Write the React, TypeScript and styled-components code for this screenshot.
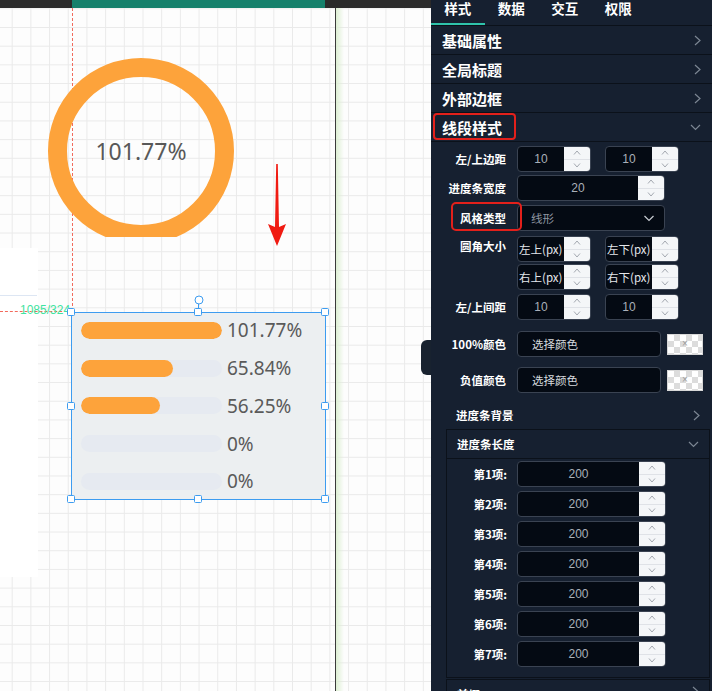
import React from 'react';
import styled, { createGlobalStyle } from 'styled-components';

const ORANGE = '#fda33b';
const BLUE = '#3d9cf0';
const GRID = '#eaeaea';
const PANEL_BG = '#162030';
const LINE = '#0b111a';

const GlobalStyle = createGlobalStyle`
  html, body {
    margin: 0;
    padding: 0;
    background: #fff;
  }
  body {
    width: 712px;
    height: 691px;
    overflow: hidden;
    font-family: "Noto Sans", "Noto Sans CJK SC", sans-serif;
  }
`;

const Root = styled.div`
  display: flex;
  width: 712px;
  height: 691px;
  overflow: hidden;
`;

/* ---------- canvas ---------- */

const Canvas = styled.div`
  width: 431px;
  display: flex;
  flex-direction: column;
`;

const ScrollTrack = styled.div`
  height: 8px;
  background: #2a2a2a;
  display: flex;
`;

const ScrollThumb = styled.div`
  margin-left: 72px;
  width: 253px;
  background: #15806b;
`;

const Stage = styled.div`
  position: relative;
  flex: 1;
  overflow: hidden;
  background-color: #fdfdfd;
  background-image: linear-gradient(to right, ${GRID} 1px, transparent 1px),
    linear-gradient(to bottom, ${GRID} 1px, transparent 1px);
  background-size: 18.7px 18.7px;
  background-position: 11.7px 0.3px;
`;

const SideSheet = styled.div`
  position: absolute;
  left: 0;
  top: 240px;
  width: 38px;
  height: 329px;
  background: #fff;
`;

const SheetRule = styled.div`
  margin-top: 47px;
  width: 37px;
  height: 1px;
  background: #dde6f3;
`;

const GuideV = styled.div`
  position: absolute;
  left: 72px;
  top: 0;
  height: 303px;
  border-left: 1px dashed #f26a5c;
`;

const GuideH = styled.div`
  position: absolute;
  left: 0;
  top: 303px;
  width: 72px;
  border-top: 1px dashed #f26a5c;
`;

const Coord = styled.span`
  position: absolute;
  left: 20px;
  top: 295px;
  font-family: "Liberation Sans", sans-serif;
  font-size: 12px;
  color: #3fe3a0;
`;

const RingWidget = styled.div`
  position: absolute;
  left: 39px;
  top: 41px;
  width: 204px;
  height: 188px;
  overflow: hidden;
`;

const RingFace = styled.div`
  position: relative;
  width: 204px;
  height: 204px;
  display: flex;
  align-items: center;
  justify-content: center;

  svg {
    position: absolute;
    inset: 0;
  }
`;

const RingValue = styled.span`
  position: relative;
  font-size: 23px;
  color: #585858;
  font-family: "Noto Sans", sans-serif;
`;

const ArrowMark = styled.svg`
  position: absolute;
  left: 266px;
  top: 155px;
`;

const ScreenEdge = styled.div`
  position: absolute;
  left: 335px;
  top: 0;
  bottom: 0;
  width: 8px;
  border-left: 1px solid #3a3a3a;
  background: linear-gradient(to right, #ddefd3, rgba(221, 239, 211, 0));
`;

const ProgressFrame = styled.div`
  position: absolute;
  left: 71px;
  top: 304px;
  width: 255px;
  height: 188px;
  box-sizing: border-box;
  background: #eceff1;
  border: 1px solid ${BLUE};
`;

const ProgressList = styled.div`
  display: grid;
  grid-auto-rows: 37.75px;
  margin-top: -1.5px;
  padding-left: 9px;
`;

const ProgressRow = styled.div`
  display: flex;
  align-items: center;
`;

const Track = styled.div`
  width: 141px;
  height: 17px;
  border-radius: 9px;
  background: #e6eaf1;
  overflow: hidden;
`;

const Fill = styled.div`
  height: 100%;
  border-radius: 9px;
  background: ${ORANGE};
`;

const ProgressValue = styled.span`
  margin-left: 5px;
  font-size: 19px;
  color: #5a5a5a;
  font-family: "Noto Sans", sans-serif;
`;

const Handle = styled.span<{ $x: number; $y: number }>`
  position: absolute;
  left: ${p => p.$x}px;
  top: ${p => p.$y}px;
  width: 8px;
  height: 8px;
  box-sizing: border-box;
  transform: translate(-50%, -50%);
  background: #fff;
  border: 1.5px solid ${BLUE};
  border-radius: 1.5px;
`;

const RotateStem = styled.span`
  position: absolute;
  left: 126px;
  top: -10px;
  width: 1px;
  height: 6px;
  background: ${BLUE};
`;

const RotateKnob = styled.span`
  position: absolute;
  left: 127px;
  top: -13px;
  width: 9px;
  height: 9px;
  box-sizing: border-box;
  transform: translate(-50%, -50%);
  border: 1.5px solid ${BLUE};
  border-radius: 50%;
  background: #fff;
`;

/* ---------- panel ---------- */

const Panel = styled.aside`
  position: relative;
  width: 281px;
  height: 691px;
  background: ${PANEL_BG};
  color: #fff;
  font-family: "Noto Sans CJK SC", "Noto Sans", sans-serif;
  display: flex;
  flex-direction: column;
  flex-shrink: 0;
`;

const SideTab = styled.div`
  position: absolute;
  left: -10px;
  top: 340px;
  width: 10px;
  height: 35px;
  border-radius: 6px 0 0 6px;
  background: #18222f;
`;

const Tabs = styled.div`
  display: flex;
  height: 25px;
  border-bottom: 1px solid ${LINE};
  flex-shrink: 0;
`;

const Tab = styled.div<{ $active?: boolean }>`
  width: 53.5px;
  height: 25px;
  box-sizing: border-box;
  padding-top: 1px;
  text-align: center;
  font-size: 13.5px;
  font-weight: 700;
  line-height: 14px;
  border-bottom: 2px solid ${p => (p.$active ? '#2fc3ab' : 'transparent')};
`;

const SectionHeader = styled.div`
  position: relative;
  height: 28px;
  flex-shrink: 0;
  display: flex;
  align-items: center;
  justify-content: space-between;
  padding: 0 11px 0 11px;
  border-bottom: 1px solid ${LINE};
  font-size: 15px;
  font-weight: 700;
`;

const Callout = styled.span`
  position: absolute;
  left: 2px;
  top: 0;
  width: 83px;
  height: 27px;
  box-sizing: border-box;
  border: 2px solid #e3201b;
  border-radius: 4px;
`;

const Form = styled.div`
  display: flex;
  flex-direction: column;
`;

const FieldRow = styled.div<{ $mt: number; $top?: boolean }>`
  display: flex;
  align-items: ${p => (p.$top ? 'flex-start' : 'center')};
  margin-top: ${p => p.$mt}px;
`;

const FieldLabel = styled.div<{ $w?: number; $pad?: number }>`
  position: relative;
  width: ${p => p.$w ?? 86}px;
  padding-right: ${p => p.$pad ?? 11}px;
  box-sizing: border-box;
  flex-shrink: 0;
  text-align: right;
  font-size: 11.5px;
  font-weight: 700;
  line-height: 20px;
  white-space: nowrap;
`;

const LabelCallout = styled.span`
  position: absolute;
  left: 20px;
  top: -6px;
  width: 71px;
  height: 29px;
  box-sizing: border-box;
  border: 2px solid #e3201b;
  border-radius: 5px;
`;

const Pair = styled.div`
  display: flex;
  gap: 14px;
`;

const Stack = styled.div`
  display: flex;
  flex-direction: column;
  gap: 2px;
`;

const Field = styled.div<{ $w: number }>`
  display: flex;
  width: ${p => p.$w}px;
  height: 26px;
  box-sizing: border-box;
  border: 1px solid #3a4352;
  border-radius: 4px;
  background: #040a13;
  overflow: hidden;
`;

const FieldValue = styled.div<{ $placeholder?: boolean }>`
  flex: 1;
  display: flex;
  align-items: center;
  justify-content: ${p => (p.$placeholder ? 'flex-start' : 'center')};
  padding-left: ${p => (p.$placeholder ? '1px' : '0')};
  font-family: ${p => (p.$placeholder ? '"Noto Sans CJK SC", sans-serif' : '"Liberation Sans", sans-serif')};
  font-size: ${p => (p.$placeholder ? '11.5px' : '12px')};
  color: ${p => (p.$placeholder ? '#e4e7eb' : '#a9b0b9')};
  white-space: nowrap;
`;

const Stepper = styled.div`
  width: 26px;
  flex-shrink: 0;
  display: flex;
  flex-direction: column;
  background: #f4f6f8;
`;

const StepHalf = styled.div<{ $first?: boolean }>`
  flex: 1;
  display: flex;
  align-items: center;
  justify-content: center;
  border-bottom: ${p => (p.$first ? '1px solid #dfe2e7' : 'none')};
`;

const SelectBox = styled.div`
  display: flex;
  align-items: center;
  justify-content: space-between;
  width: 148px;
  height: 26px;
  box-sizing: border-box;
  padding: 0 9px 0 13px;
  border: 1px solid #3a4352;
  border-radius: 4px;
  background: #040a13;
  font-size: 11.5px;
  color: #8e96a1;
`;

const ColorInput = styled.div`
  display: flex;
  align-items: center;
  width: 144px;
  height: 26px;
  box-sizing: border-box;
  padding-left: 14px;
  border: 1px solid #3a4352;
  border-radius: 4px;
  background: #040a13;
  font-size: 11.5px;
  color: #d6dadf;
`;

const Swatch = styled.div`
  position: relative;
  margin-left: 6px;
  width: 36px;
  height: 21px;
  box-sizing: border-box;
  border: 1px solid #d8d8d8;
  background-color: #fff;
  background-image: linear-gradient(45deg, #dcdcdc 25%, transparent 25%),
    linear-gradient(-45deg, #dcdcdc 25%, transparent 25%),
    linear-gradient(45deg, transparent 75%, #dcdcdc 75%),
    linear-gradient(-45deg, transparent 75%, #dcdcdc 75%);
  background-size: 12px 12px;
  background-position: 0 0, 0 6px, 6px -6px, -6px 0;
  display: flex;
  align-items: center;
  justify-content: center;
  font-family: "Liberation Sans", sans-serif;
  font-size: 10px;
  line-height: 10px;
  color: #9a9a9a;
`;

const SubHeader = styled.div`
  height: 28px;
  flex-shrink: 0;
  display: flex;
  align-items: center;
  justify-content: space-between;
  padding: 0 12px 0 25px;
  margin-top: 8px;
  font-size: 11.5px;
  font-weight: 700;
`;

const SubPanel = styled.div`
  margin: 0 2px 0 15px;
  border: 1px solid ${LINE};
  flex-shrink: 0;
`;

const SubPanelHeader = styled.div`
  height: 28px;
  display: flex;
  align-items: center;
  justify-content: space-between;
  padding: 0 10px 0 10px;
  border-bottom: 1px solid ${LINE};
  font-size: 11.5px;
  font-weight: 700;
`;

const SubPanelBody = styled.div`
  display: flex;
  flex-direction: column;
  gap: 4px;
  padding: 2px 0 10px;
`;

const NextPanel = styled.div`
  margin: 1px 2px 0 15px;
  border: 1px solid ${LINE};
  height: 40px;
  padding: 6px 10px 0;
  box-sizing: border-box;
  font-size: 11.5px;
  font-weight: 700;
  display: flex;
  justify-content: space-between;
  align-items: flex-start;
`;

/* ---------- icons ---------- */

const ChevronRight = () => (
  <svg width="7" height="11" viewBox="0 0 7 11">
    <polyline points="1,1 6,5.5 1,10" fill="none" stroke="#7c8693" strokeWidth="1.2" />
  </svg>
);

const ChevronDown = ({ color = '#7c8693', w = 11 }: { color?: string; w?: number }) => (
  <svg width={w} height={Math.round(w * 0.6)} viewBox="0 0 11 7">
    <polyline points="1,1 5.5,5.5 10,1" fill="none" stroke={color} strokeWidth="1.2" />
  </svg>
);

const StepArrow = ({ up }: { up?: boolean }) => (
  <svg width="8" height="5" viewBox="0 0 8 5">
    <polyline
      points={up ? '1,4.5 4,1 7,4.5' : '1,0.5 4,4 7,0.5'}
      fill="none"
      stroke="#a3a8b0"
      strokeWidth="1"
    />
  </svg>
);

/* ---------- pieces ---------- */

const NumberField: React.FC<{ width: number; value?: string; placeholder?: string }> = ({
  width,
  value,
  placeholder,
}) => (
  <Field $w={width}>
    <FieldValue $placeholder={!!placeholder}>{placeholder ?? value}</FieldValue>
    <Stepper>
      <StepHalf $first>
        <StepArrow up />
      </StepHalf>
      <StepHalf>
        <StepArrow />
      </StepHalf>
    </Stepper>
  </Field>
);

const progress = [
  { label: '101.77%', width: 141 },
  { label: '65.84%', width: 92 },
  { label: '56.25%', width: 79 },
  { label: '0%', width: 0 },
  { label: '0%', width: 0 },
];

const handles = [
  [0, 0], [127, 0], [254, 0],
  [0, 94], [254, 94],
  [0, 187], [127, 187], [254, 187],
];

const tabs = ['样式', '数据', '交互', '权限'];
const collapsed = ['基础属性', '全局标题', '外部边框'];
const items = [1, 2, 3, 4, 5, 6, 7];

export default function App() {
  return (
    <>
      <GlobalStyle />
      <Root>
        <Canvas>
          <ScrollTrack>
            <ScrollThumb />
          </ScrollTrack>
          <Stage>
            <SideSheet>
              <SheetRule />
            </SideSheet>
            <GuideV />
            <GuideH />
            <Coord>1085/324</Coord>

            <RingWidget>
              <RingFace>
                <svg width="204" height="204" viewBox="0 0 204 204">
                  <circle cx="102" cy="102" r="83.5" fill="none" stroke={ORANGE} strokeWidth="19" />
                </svg>
                <RingValue>101.77%</RingValue>
              </RingFace>
            </RingWidget>

            <ArrowMark width="22" height="84" viewBox="0 0 22 84">
              <path d="M10.2 1 L11.8 1 L13 64 L20 61 L11 83 L2 61 L9 64 Z" fill="#f01b12" />
            </ArrowMark>

            <ScreenEdge />

            <ProgressFrame>
              <ProgressList>
                {progress.map((p, i) => (
                  <ProgressRow key={i}>
                    <Track>
                      <Fill style={{ width: p.width }} />
                    </Track>
                    <ProgressValue>{p.label}</ProgressValue>
                  </ProgressRow>
                ))}
              </ProgressList>
              <RotateStem />
              <RotateKnob />
              {handles.map(([x, y], i) => (
                <Handle key={i} $x={x - 1} $y={y - 1} />
              ))}
            </ProgressFrame>
          </Stage>
        </Canvas>

        <Panel>
          <SideTab />
          <Tabs>
            {tabs.map((t, i) => (
              <Tab key={t} $active={i === 0}>
                {t}
              </Tab>
            ))}
          </Tabs>

          {collapsed.map(t => (
            <SectionHeader key={t}>
              <span>{t}</span>
              <ChevronRight />
            </SectionHeader>
          ))}
          <SectionHeader>
            <Callout />
            <span>线段样式</span>
            <ChevronDown />
          </SectionHeader>

          <Form>
            <FieldRow $mt={4}>
              <FieldLabel>左/上边距</FieldLabel>
              <Pair>
                <NumberField width={74} value="10" />
                <NumberField width={74} value="10" />
              </Pair>
            </FieldRow>

            <FieldRow $mt={3}>
              <FieldLabel>进度条宽度</FieldLabel>
              <NumberField width={148} value="20" />
            </FieldRow>

            <FieldRow $mt={4}>
              <FieldLabel>
                <LabelCallout />
                风格类型
              </FieldLabel>
              <SelectBox>
                <span>线形</span>
                <ChevronDown color="#c9cdd3" w={12} />
              </SelectBox>
            </FieldRow>

            <FieldRow $mt={5} $top>
              <FieldLabel>圆角大小</FieldLabel>
              <Stack>
                <Pair>
                  <NumberField width={74} placeholder="左上(px)" />
                  <NumberField width={74} placeholder="左下(px)" />
                </Pair>
                <Pair>
                  <NumberField width={74} placeholder="右上(px)" />
                  <NumberField width={74} placeholder="右下(px)" />
                </Pair>
              </Stack>
            </FieldRow>

            <FieldRow $mt={4}>
              <FieldLabel>左/上间距</FieldLabel>
              <Pair>
                <NumberField width={74} value="10" />
                <NumberField width={74} value="10" />
              </Pair>
            </FieldRow>

            <FieldRow $mt={11}>
              <FieldLabel>100%颜色</FieldLabel>
              <ColorInput>选择颜色</ColorInput>
              <Swatch>×</Swatch>
            </FieldRow>

            <FieldRow $mt={10}>
              <FieldLabel>负值颜色</FieldLabel>
              <ColorInput>选择颜色</ColorInput>
              <Swatch>×</Swatch>
            </FieldRow>
          </Form>

          <SubHeader>
            <span>进度条背景</span>
            <ChevronRight />
          </SubHeader>

          <SubPanel>
            <SubPanelHeader>
              <span>进度条长度</span>
              <ChevronDown />
            </SubPanelHeader>
            <SubPanelBody>
              {items.map(n => (
                <FieldRow key={n} $mt={0}>
                  <FieldLabel $w={70} $pad={10}>
                    第{n}项:
                  </FieldLabel>
                  <NumberField width={149} value="200" />
                </FieldRow>
              ))}
            </SubPanelBody>
          </SubPanel>

          <NextPanel>
            <span>前缀</span>
            <ChevronRight />
          </NextPanel>
        </Panel>
      </Root>
    </>
  );
}
